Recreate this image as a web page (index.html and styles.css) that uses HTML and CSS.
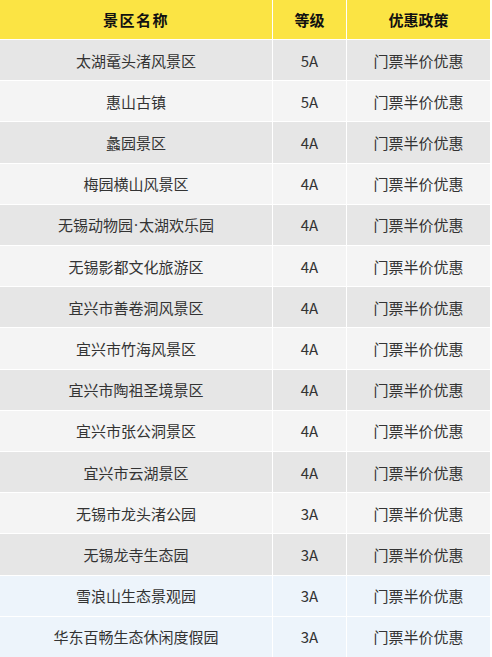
FILE: index.html
```html
<!DOCTYPE html>
<html lang="zh-CN">
<head>
<meta charset="utf-8">
<title>景区优惠政策</title>
<link rel="stylesheet" href="styles.css">
</head>
<body>
<div class="table">
  <div class="cell head name">景区名称</div>
  <div class="cell head">等级</div>
  <div class="cell head">优惠政策</div>

  <div class="cell dark">太湖鼋头渚风景区</div><div class="cell dark">5A</div><div class="cell dark">门票半价优惠</div>
  <div class="cell light">惠山古镇</div><div class="cell light">5A</div><div class="cell light">门票半价优惠</div>
  <div class="cell dark">蠡园景区</div><div class="cell dark">4A</div><div class="cell dark">门票半价优惠</div>
  <div class="cell light">梅园横山风景区</div><div class="cell light">4A</div><div class="cell light">门票半价优惠</div>
  <div class="cell dark">无锡动物园<span class="dot">·</span>太湖欢乐园</div><div class="cell dark">4A</div><div class="cell dark">门票半价优惠</div>
  <div class="cell light">无锡影都文化旅游区</div><div class="cell light">4A</div><div class="cell light">门票半价优惠</div>
  <div class="cell dark">宜兴市善卷洞风景区</div><div class="cell dark">4A</div><div class="cell dark">门票半价优惠</div>
  <div class="cell light">宜兴市竹海风景区</div><div class="cell light">4A</div><div class="cell light">门票半价优惠</div>
  <div class="cell dark">宜兴市陶祖圣境景区</div><div class="cell dark">4A</div><div class="cell dark">门票半价优惠</div>
  <div class="cell light">宜兴市张公洞景区</div><div class="cell light">4A</div><div class="cell light">门票半价优惠</div>
  <div class="cell dark">宜兴市云湖景区</div><div class="cell dark">4A</div><div class="cell dark">门票半价优惠</div>
  <div class="cell light">无锡市龙头渚公园</div><div class="cell light">3A</div><div class="cell light">门票半价优惠</div>
  <div class="cell dark">无锡龙寺生态园</div><div class="cell dark">3A</div><div class="cell dark">门票半价优惠</div>
  <div class="cell blue">雪浪山生态景观园</div><div class="cell blue">3A</div><div class="cell blue">门票半价优惠</div>
  <div class="cell blue">华东百畅生态休闲度假园</div><div class="cell blue">3A</div><div class="cell blue">门票半价优惠</div>
</div>
</body>
</html>
```
FILE: styles.css
```css
html, body {
  margin: 0;
  padding: 0;
  background: #ffffff;
}

body {
  font-family: "Noto Sans CJK SC", "Noto Sans", sans-serif;
  font-size: 15px;
  color: #333333;
}

.table {
  width: 490px;
  height: 657px;
  display: grid;
  grid-template-columns: 272px 73px 143px;
  grid-template-rows: 39px repeat(15, 1fr);
  gap: 1px;
  background: #ffffff;
}

.cell {
  display: flex;
  align-items: center;
  justify-content: center;
  line-height: 1;
  white-space: nowrap;
}

.dot {
  font-family: "Noto Sans", "Liberation Sans", sans-serif;
  padding: 0 1px;
}

.head {
  background: #fbe444;
  color: #111111;
  font-weight: bold;
}

.head.name {
  letter-spacing: 1.5px;
}

.dark {
  background: #e6e6e6;
}

.light {
  background: #f4f4f4;
}

.blue {
  background: #edf4fb;
}
```
